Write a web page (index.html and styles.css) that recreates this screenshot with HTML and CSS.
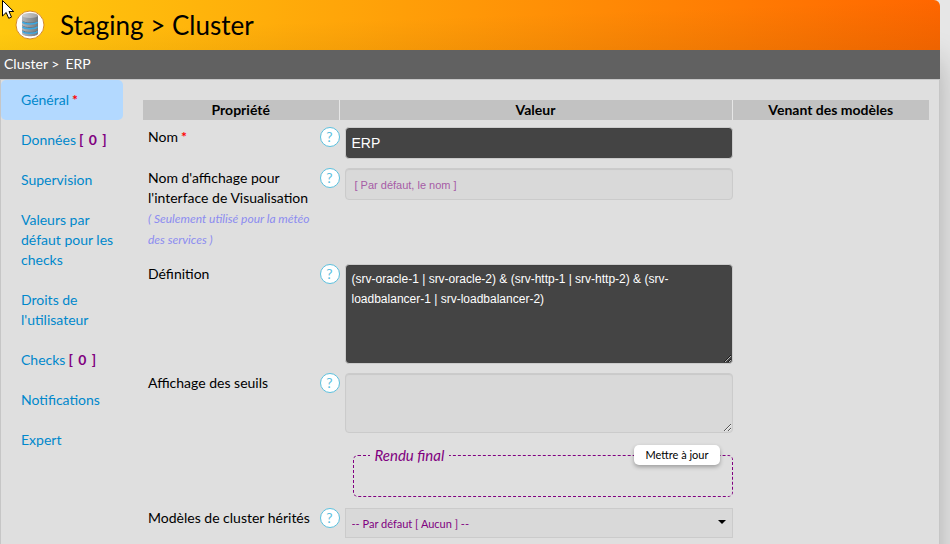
FILE: index.html
```html
<!DOCTYPE html>
<html lang="fr">
<head>
<meta charset="utf-8">
<title>Staging &gt; Cluster</title>
<link rel="stylesheet" href="styles.css">
</head>
<body>
<svg class="pointer" width="14" height="21" viewBox="0 0 14 21" aria-hidden="true"><path d="M2.500 .5v15.500l3.700-3.500 2.500 5.800 2.800-1.200-2.500-5.600h4.700z" fill="#fff" stroke="#000"/></svg>
<div class="panel">
  <header class="banner">
    <svg class="logo" width="30" height="30" viewBox="0 0 30 30" aria-hidden="true">
      <defs>
        <linearGradient id="metal"><stop offset="0" stop-color="#b4b7ba"/><stop offset=".35" stop-color="#9a9ea2"/><stop offset="1" stop-color="#74797d"/></linearGradient>
        <linearGradient id="lid"><stop offset="0" stop-color="#d0d0d0"/><stop offset="1" stop-color="#a2a2a2"/></linearGradient>
      </defs>
      <circle cx="15" cy="15" r="14" fill="#fff" stroke="#d58a2c"/>
      <path d="M7 5.500v18c0 3.700 16 3.700 16 0v-18z" fill="url(#metal)"/>
      <path d="M7.500 11c2 2.600 13 2.600 15 0M7.500 15.700c2 2.600 13 2.600 15 0M7.500 20.400c2 2.600 13 2.600 15 0" fill="none" stroke="#6b767d" stroke-width="1"/>
      <path d="M7.500 12c2 2.600 13 2.600 15 0M7.500 16.700c2 2.600 13 2.600 15 0M7.500 21.400c2 2.600 13 2.600 15 0" fill="none" stroke="#3aa8e4" stroke-width="1.500"/>
      <ellipse cx="15" cy="5.500" rx="8" ry="2.500" fill="url(#lid)"/>
    </svg>
    <h1>Staging &gt; Cluster</h1>
  </header>
  <div class="crumbs"><span>Cluster &gt;</span><span>ERP</span></div>
  <div class="body">
    <nav class="tabs">
      <a class="active" href="#general">Général<b class="req">*</b></a>
      <a href="#donnees">Données<b class="count">[ <span>0</span> ]</b></a>
      <a href="#supervision">Supervision</a>
      <a href="#valeurs">Valeurs par défaut pour les checks</a>
      <a href="#droits">Droits de l'utilisateur</a>
      <a href="#checks">Checks<b class="count">[ <span>0</span> ]</b></a>
      <a href="#notifications">Notifications</a>
      <a href="#expert">Expert</a>
    </nav>
    <form class="main">
      <table class="props">
        <colgroup><col class="side"><col><col class="side"></colgroup>
        <thead><tr><th>Propriété</th><th>Valeur</th><th>Venant des modèles</th></tr></thead>
        <tbody>
          <tr>
            <td><div class="prop"><label for="nom">Nom<b class="req">*</b></label><button type="button" class="help">?</button></div></td>
            <td class="value"><input id="nom" class="field dark" type="text" value="ERP"></td>
            <td></td>
          </tr>
          <tr>
            <td><div class="prop"><label for="affichage">Nom d'affichage pour l'interface de Visualisation <i class="note">( Seulement utilisé pour la météo des services )</i></label><button type="button" class="help">?</button></div></td>
            <td class="value"><input id="affichage" class="field" type="text" placeholder="[ Par défaut, le nom ]"></td>
            <td></td>
          </tr>
          <tr>
            <td><div class="prop"><label for="definition">Définition</label><button type="button" class="help">?</button></div></td>
            <td class="value"><textarea id="definition" class="field dark tall">(srv-oracle-1 | srv-oracle-2) &amp; (srv-http-1 | srv-http-2) &amp; (srv-loadbalancer-1 | srv-loadbalancer-2)</textarea></td>
            <td></td>
          </tr>
          <tr>
            <td><div class="prop"><label for="seuils">Affichage des seuils</label><button type="button" class="help">?</button></div></td>
            <td class="value">
              <textarea id="seuils" class="field"></textarea>
              <fieldset class="render"><legend>Rendu final</legend><button type="button" class="update">Mettre à jour</button></fieldset>
            </td>
            <td></td>
          </tr>
          <tr>
            <td><div class="prop"><label for="modeles">Modèles de cluster hérités</label><button type="button" class="help">?</button></div></td>
            <td class="value"><div class="picker"><select id="modeles"><option>-- Par défaut [ Aucun ] --</option></select><svg width="8" height="4" viewBox="0 0 8 4" aria-hidden="true"><path d="M0 0h8L4 4z"/></svg></div></td>
            <td></td>
          </tr>
        </tbody>
      </table>
    </form>
  </div>
</div>
</body>
</html>
```
FILE: styles.css
```css
* { box-sizing: border-box; }
html { overflow: hidden; }
body {
  margin: 0;
  background: #e6e6e6;
  color: #000;
  font: 14px/20px Lato, "Liberation Sans", sans-serif;
}
.pointer { position: absolute; left: 0; top: 0; z-index: 2; }
.panel {
  margin-right: 10px;
  min-height: 100vh;
  display: flex;
  flex-direction: column;
  border-radius: 0 6px 0 0;
  box-shadow: 0 60px 30px rgba(0, 0, 0, .25);
}
.banner {
  height: 50px;
  display: flex;
  align-items: center;
  gap: 15px;
  padding-left: 15px;
  border-radius: 0 6px 0 0;
  background:
    linear-gradient(178deg, transparent 40%, rgba(130, 80, 0, .14)),
    linear-gradient(90deg, #ffc90e, #ff6600);
}
h1 { margin: 0; font-size: 26px; font-weight: 400; line-height: 32px; }
.crumbs {
  display: flex;
  gap: 6px;
  padding: 4px 4px 5px;
  background: #616161;
  color: #fff;
}
.body {
  flex: 1;
  display: flex;
  background: #dfdfdf;
  border: 1px solid #c6c6c6;
  border-bottom: 0;
}
.tabs { width: 122px; flex: none; }
.tabs a {
  display: block;
  padding: 10px 8px 10px 20px;
  color: #0088cc;
  text-decoration: none;
}
.tabs .active { background: #b3d9ff; border-radius: 5px; }
.req { margin-left: 3px; color: #f00; }
.count { margin-left: 3px; color: purple; }
.count span { padding: 0 2px; }
.main { flex: 1; padding: 20px 10px 0 20px; }
.props { width: 100%; table-layout: fixed; border-collapse: separate; border-spacing: 0; }
.side { width: 25%; }
th { height: 20px; padding: 0; background: #c2c2c2; font-weight: 700; }
th:not(:last-child) { border-right: 1px solid #e6e6e6; }
td { padding: 0 0 9px; vertical-align: top; }
tbody tr:first-child td { padding-top: 7px; }
.value { padding-left: 5px; }
.prop { display: flex; padding-left: 5px; }
.prop label { flex: 1; }
.note { display: block; margin-bottom: 5px; color: #8c8cf0; font-size: 12px; line-height: 21px; }
.help {
  flex: none;
  width: 20px;
  height: 20px;
  padding: 0;
  border: 1px solid #5bc0de;
  border-radius: 50%;
  background: #fff;
  color: #5bc0de;
  font: 14px/18px Lato, sans-serif;
}
.field {
  display: block;
  width: 100%;
  height: 32px;
  margin: 0;
  padding: 4px 6px;
  border: 1px solid #cbcbcb;
  border-radius: 4px;
  background: #d9d9d9;
  box-shadow: inset 0 1px 1px rgba(0, 0, 0, .075);
  color: #000;
  font: 14px/20px "Liberation Sans", Arial, sans-serif;
}
textarea.field { height: 60px; font-size: 12px; }
.field::placeholder { color: #a65ca6; font-size: 11px; text-indent: 3px; }
.field.dark { background: #444; color: #fff; }
.field.tall { height: 100px; }
.render {
  position: relative;
  height: 52px;
  margin: 12px 0 2px 8px;
  padding: 0;
  border: 1px dashed purple;
  border-radius: 5px;
}
.render legend { margin-left: 16px; padding: 0 5px; color: purple; font-size: 15px; font-style: italic; }
.update {
  position: absolute;
  top: -20px;
  right: 12px;
  height: 20px;
  padding: 0 11px;
  border: 0;
  border-radius: 5px;
  background: #fff;
  box-shadow: 0 2px 4px rgba(0, 0, 0, .3);
  font: 11px/20px Lato, sans-serif;
}
.picker { position: relative; }
.picker select {
  display: block;
  width: 100%;
  height: 30px;
  padding: 2px 6px 0;
  border: 1px solid #cbcbcb;
  border-radius: 0;
  appearance: none;
  background: #d9d9d9;
  color: purple;
  font: 11px/20px Lato, sans-serif;
}
.picker svg { position: absolute; right: 7px; top: 12px; }
```
